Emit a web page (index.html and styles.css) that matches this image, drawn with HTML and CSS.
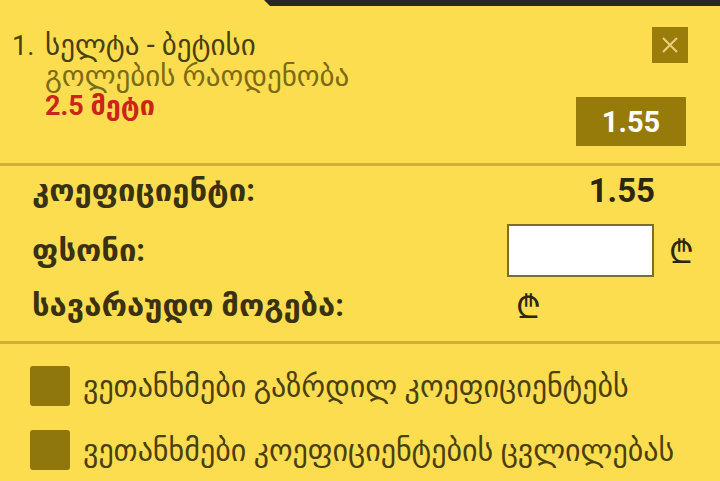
FILE: index.html
```html
<!DOCTYPE html>
<html lang="ka">
<head>
    <meta charset="UTF-8">
    <meta name="viewport" content="width=device-width, initial-scale=1.0">
    <title>ბილეთი</title>
    <link rel="stylesheet" href="styles.css">
</head>
<body>

    <div class="top-bar"></div>

    <div class="bet-item">
        <div class="bet-info">
            <div class="bet-title"><span class="bet-num">1.</span>სელტა - ბეტისი</div>
            <div class="bet-market">გოლების რაოდენობა</div>
            <div class="bet-pick">2.5 მეტი</div>
        </div>
        <div class="bet-side">
            <button class="close-btn" type="button">
                <svg width="20" height="20" viewBox="0 0 20 20">
                    <path d="M3 3 L17 17 M17 3 L3 17" stroke="#e9d27a" stroke-width="2" fill="none"/>
                </svg>
            </button>
            <div class="odds-box">1.55</div>
        </div>
    </div>

    <div class="divider"></div>

    <div class="summary">
        <div class="row">
            <span class="label">კოეფიციენტი:</span>
            <span class="total-odds">1.55</span>
        </div>
        <div class="row">
            <span class="label">ფსონი:</span>
            <div class="stake">
                <input type="text" class="stake-input">
                <span class="lari">₾</span>
            </div>
        </div>
        <div class="row">
            <span class="label">სავარაუდო მოგება:</span>
            <span class="lari win">₾</span>
        </div>
    </div>

    <div class="divider"></div>

    <div class="options">
        <label class="option">
            <span class="check"></span>
            ვეთანხმები გაზრდილ კოეფიციენტებს
        </label>
        <label class="option">
            <span class="check"></span>
            ვეთანხმები კოეფიციენტების ცვლილებას
        </label>
    </div>

</body>
</html>
```

FILE: styles.css
```css
* {
    margin: 0;
    padding: 0;
    box-sizing: border-box;
}

body {
    font-family: Roboto, "DejaVu Sans", sans-serif;
    background-color: #fcdd4f;
    color: #3d3410;
    width: 720px;
    height: 481px;
    overflow: hidden;
}

.top-bar {
    height: 6px;
    margin-left: 264px;
    background: #2a2622;
    clip-path: polygon(0 0, 100% 0, 100% 100%, 6px 100%);
}

/* Bet item */
.bet-item {
    display: flex;
    justify-content: space-between;
    padding: 21px 32px 0 12px;
    height: 157px;
}

.bet-info {
    padding-top: 3px;
}

.bet-title {
    font-size: 29px;
    color: #4a3f0f;
    line-height: 30px;
    white-space: nowrap;
}

.bet-num {
    display: inline-block;
    width: 33px;
    font-size: 27px;
}

.bet-market {
    font-size: 29px;
    color: #7c6a16;
    line-height: 31px;
    padding-left: 33px;
    white-space: nowrap;
}

.bet-pick {
    font-size: 27px;
    font-weight: bold;
    color: #c9251a;
    line-height: 28px;
    padding-left: 33px;
}

.bet-side {
    display: flex;
    flex-direction: column;
    align-items: flex-end;
}

.close-btn {
    width: 36px;
    height: 36px;
    background: #9a7c0b;
    border: none;
    display: flex;
    align-items: center;
    justify-content: center;
}

.odds-box {
    margin-top: 34px;
    margin-right: 2px;
    width: 110px;
    height: 49px;
    background: #967b0a;
    color: #fff;
    font-weight: bold;
    font-size: 29px;
    display: flex;
    align-items: center;
    justify-content: center;
}

.divider {
    height: 3px;
    background: #d2b035;
}

/* Summary */
.summary {
    padding-left: 32px;
    height: 175px;
}

.row {
    display: flex;
    align-items: center;
    justify-content: space-between;
    font-weight: bold;
    font-size: 31px;
    white-space: nowrap;
}

.row:nth-child(1) {
    height: 48px;
    padding-right: 65px;
}

.row:nth-child(2) {
    height: 72px;
}

.row:nth-child(3) {
    height: 38px;
    justify-content: flex-start;
}

.label {
    color: #3a3110;
}

.total-odds {
    font-size: 33px;
    color: #2b2610;
}

.stake {
    display: flex;
    align-items: center;
    margin-right: 26px;
}

.stake-input {
    width: 147px;
    height: 53px;
    border: 2px solid #7d6d2c;
    background: #fff;
    margin-right: 15px;
}

.lari {
    font-size: 32px;
    font-weight: normal;
    color: #2b2610;
}

.win {
    margin-left: 172px;
}

/* Options */
.options {
    padding: 10px 0 0 30px;
}

.option {
    display: flex;
    align-items: center;
    gap: 13px;
    font-size: 30px;
    color: #4a3f0f;
    height: 64px;
    white-space: nowrap;
}

.check {
    width: 40px;
    height: 40px;
    border-radius: 3px;
    background: #8f760d;
    flex-shrink: 0;
}
```
